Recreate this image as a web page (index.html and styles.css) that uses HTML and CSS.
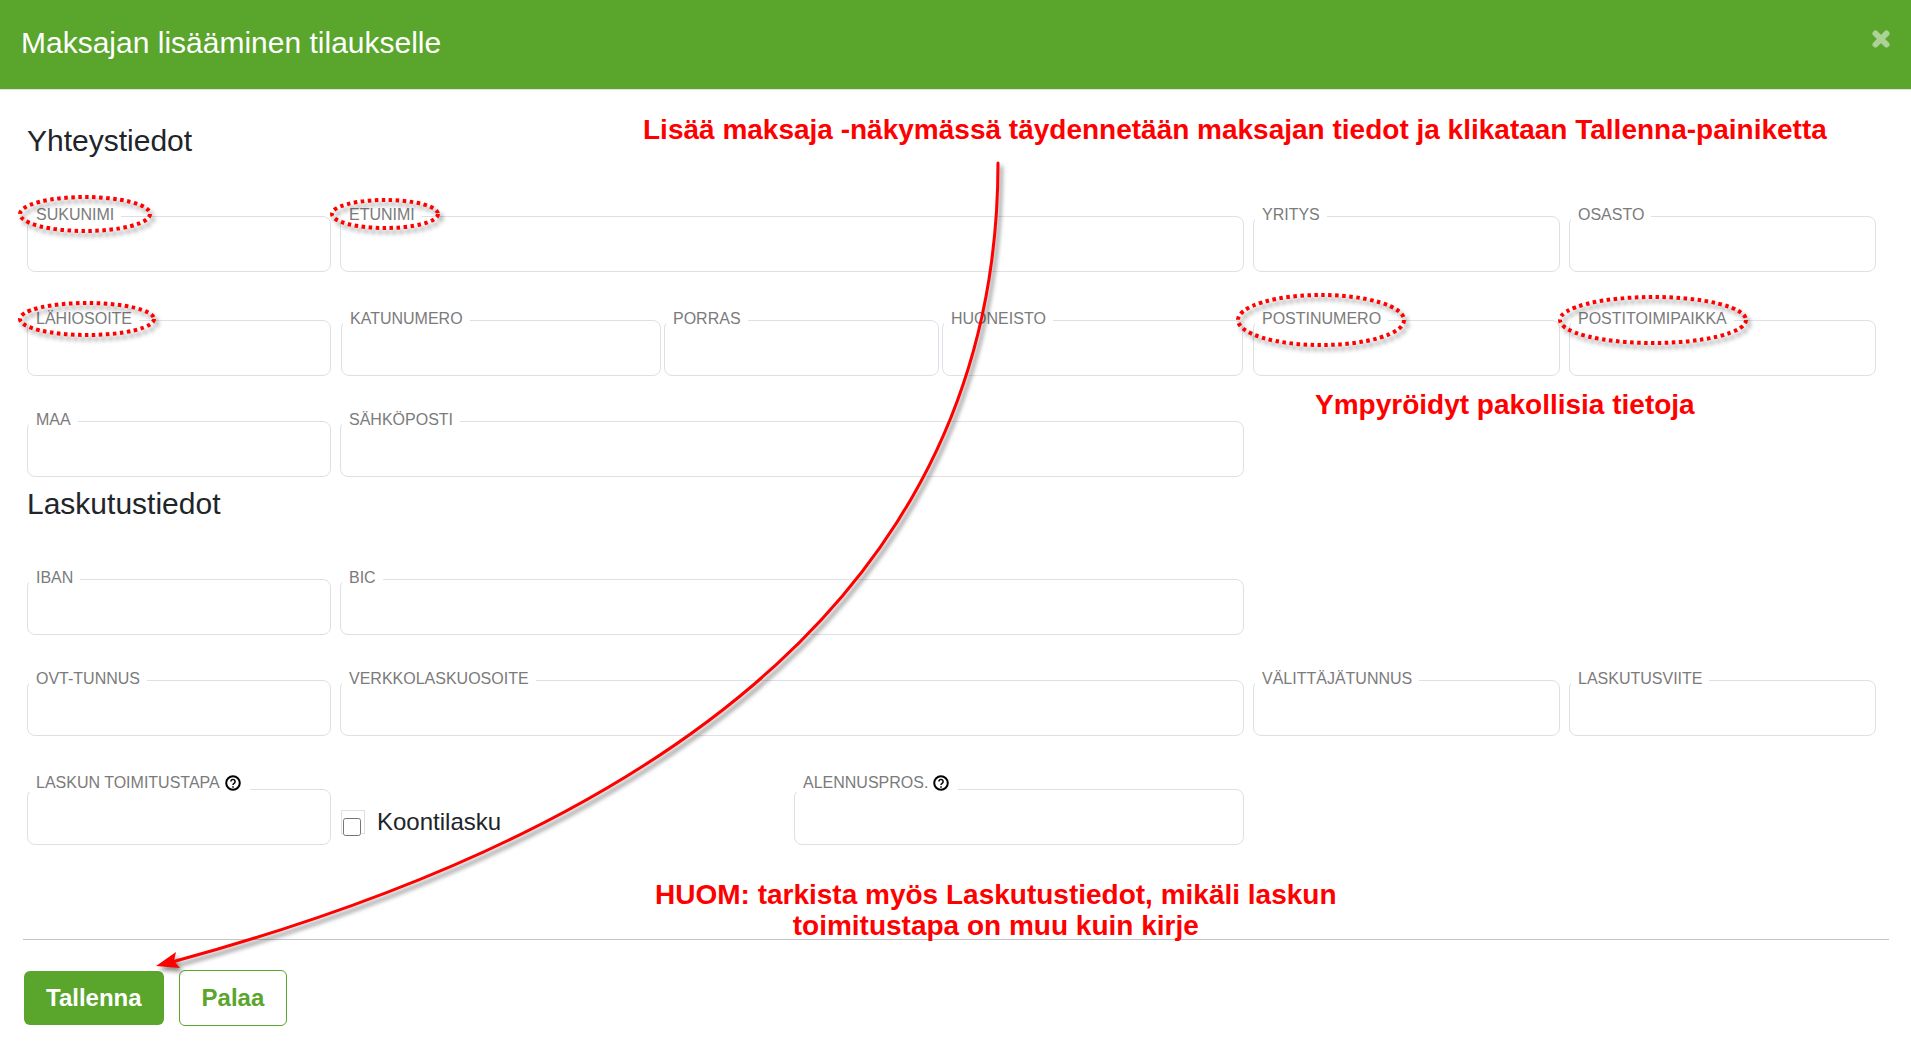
FILE: index.html
```html
<!DOCTYPE html>
<html lang="fi">
<head>
<meta charset="utf-8">
<meta name="viewport" content="width=device-width, initial-scale=1">
<title>Maksajan lisääminen tilaukselle</title>
<link rel="stylesheet" href="styles.css">
</head>
<body>
<header class="topbar">
  <h1 class="topbar-title">Maksajan lisääminen tilaukselle</h1>
  <button class="close" type="button" aria-label="Sulje">
    <svg width="20" height="20" viewBox="0 0 20 20" aria-hidden="true"><path d="M4.5 4.5 15.5 15.5M15.5 4.5 4.5 15.5" stroke="currentColor" stroke-width="6" stroke-linecap="round" fill="none"/></svg>
  </button>
</header>

<main class="page">
  <form>
    <section class="section">
      <h2 class="section-title">Yhteystiedot</h2>
      <div class="row row-spaced">
        <div class="field"><label for="sukunimi">SUKUNIMI</label><input id="sukunimi" type="text" required></div>
        <div class="field"><label for="etunimi">ETUNIMI</label><input id="etunimi" type="text" required></div>
        <div class="field"><label for="yritys">YRITYS</label><input id="yritys" type="text"></div>
        <div class="field"><label for="osasto">OSASTO</label><input id="osasto" type="text"></div>
      </div>
      <div class="row">
        <div class="field"><label for="lahiosoite">LÄHIOSOITE</label><input id="lahiosoite" type="text" required></div>
        <div class="address">
          <div class="field"><label for="katunumero">KATUNUMERO</label><input id="katunumero" type="text"></div>
          <div class="field"><label for="porras">PORRAS</label><input id="porras" type="text"></div>
          <div class="field"><label for="huoneisto">HUONEISTO</label><input id="huoneisto" type="text"></div>
        </div>
        <div class="field"><label for="postinumero">POSTINUMERO</label><input id="postinumero" type="text" required></div>
        <div class="field"><label for="postitoimipaikka">POSTITOIMIPAIKKA</label><input id="postitoimipaikka" type="text" required></div>
      </div>
      <div class="row">
        <div class="field"><label for="maa">MAA</label><input id="maa" type="text"></div>
        <div class="field"><label for="sahkoposti">SÄHKÖPOSTI</label><input id="sahkoposti" type="email"></div>
      </div>
    </section>

    <section class="section">
      <h2 class="section-title">Laskutustiedot</h2>
      <div class="row">
        <div class="field"><label for="iban">IBAN</label><input id="iban" type="text"></div>
        <div class="field"><label for="bic">BIC</label><input id="bic" type="text"></div>
      </div>
      <div class="row row-spaced">
        <div class="field"><label for="ovt">OVT-TUNNUS</label><input id="ovt" type="text"></div>
        <div class="field"><label for="verkkolasku">VERKKOLASKUOSOITE</label><input id="verkkolasku" type="text"></div>
        <div class="field"><label for="valittaja">VÄLITTÄJÄTUNNUS</label><input id="valittaja" type="text"></div>
        <div class="field"><label for="viite">LASKUTUSVIITE</label><input id="viite" type="text"></div>
      </div>
      <div class="row">
        <div class="field field-help">
          <label for="toimitustapa">LASKUN TOIMITUSTAPA
            <svg class="help" viewBox="0 0 16 16" aria-hidden="true"><circle cx="8" cy="8" r="6.8"/><path d="M5.9 6.5a2.1 2.1 0 1 1 3.2 1.8C8.3 8.8 8 9.1 8 9.9M8 11.2v1.5"/></svg>
          </label>
          <input id="toimitustapa" type="text">
        </div>
        <div class="halves">
          <label class="check"><span class="check-frame"><input type="checkbox" name="koontilasku"></span>Koontilasku</label>
          <div class="field field-help">
            <label for="alennus">ALENNUSPROS.
              <svg class="help" viewBox="0 0 16 16" aria-hidden="true"><circle cx="8" cy="8" r="6.8"/><path d="M5.9 6.5a2.1 2.1 0 1 1 3.2 1.8C8.3 8.8 8 9.1 8 9.9M8 11.2v1.5"/></svg>
            </label>
            <input id="alennus" type="text">
          </div>
        </div>
      </div>
    </section>

    <footer class="actions">
      <button class="btn btn-primary" type="submit">Tallenna</button>
      <button class="btn btn-outline" type="button">Palaa</button>
    </footer>
  </form>
</main>

<svg class="marks" aria-hidden="true">
  <g class="rings">
    <ellipse cx="85" cy="214" rx="65" ry="17"/>
    <ellipse cx="385" cy="214" rx="53" ry="14"/>
    <ellipse cx="87" cy="319" rx="67" ry="16"/>
    <ellipse cx="1321" cy="320" rx="83" ry="25"/>
    <ellipse cx="1653" cy="320" rx="93" ry="23"/>
  </g>
  <g class="arrow">
    <path class="arrow-line" d="M998 163Q998 738 172 962"/>
    <path class="arrow-head" d="M156 966 176 952 174 961 180 968Z"/>
  </g>
</svg>
<p class="note note-top">Lisää maksaja -näkymässä täydennetään maksajan tiedot ja klikataan Tallenna-painiketta</p>
<p class="note note-required">Ympyröidyt pakollisia tietoja</p>
<p class="note note-billing">HUOM: tarkista myös Laskutustiedot, mikäli laskun<br>toimitustapa on muu kuin kirje</p>
</body>
</html>
```
FILE: styles.css
```css
* {
  box-sizing: border-box;
}

body {
  position: relative;
  margin: 0;
  background: #fff;
  color: #212529;
  font-family: "Liberation Sans", Arial, sans-serif;
  font-size: 16px;
}

.topbar {
  display: flex;
  justify-content: space-between;
  align-items: flex-start;
  height: 90px;
  padding: 25px 20px 0 21px;
  background: #5aa52c;
  border-bottom: 1px solid #dee2e6;
}

.topbar-title {
  margin: 0;
  color: #fff;
  font-size: 30px;
  font-weight: 400;
  line-height: 36px;
}

.close {
  display: flex;
  margin-top: 4px;
  padding: 0;
  border: 0;
  background: none;
  color: #acd296;
}

.page {
  padding: 33px 22px 24px 23px;
}

.section {
  padding: 0 13px 0 4px;
}

.section + .section {
  margin-top: 9px;
}

.section-title {
  margin: 0 0 47px;
  font-size: 30px;
  font-weight: 400;
  line-height: 36px;
}

.row {
  display: grid;
  grid-template-columns: 304fr 904fr 307fr 307fr;
  gap: 9px;
}

.row + .row {
  margin-top: 35px;
}

.row-spaced + .row {
  margin-top: 38px;
}

.address {
  display: grid;
  grid-template-columns: 320fr 275fr 301fr;
  gap: 3px;
  padding: 0 1px;
}

.halves {
  display: grid;
  grid-template-columns: 1fr 1fr;
  gap: 4px;
}

.field {
  display: flex;
  flex-direction: column;
  align-items: flex-start;
  min-width: 0;
}

.field label {
  display: flex;
  align-items: center;
  gap: 5px;
  z-index: 1;
  margin: 0 0 -8px 2px;
  padding: 0 7px;
  background: #fff;
  color: #7b7b7b;
  line-height: 18px;
}

.field input {
  width: 100%;
  height: 56px;
  padding: 0 12px;
  border: 1px solid #dee0e6;
  border-radius: 8px;
  background: #fff;
  font: inherit;
}

.field-help label {
  margin-bottom: -3px;
  padding-right: 9px;
}

.help {
  width: 16px;
  height: 16px;
  fill: none;
  stroke: #000;
  stroke-width: 2;
}

.help path {
  stroke-width: 1.5;
}

.check {
  display: flex;
  align-items: center;
  align-self: end;
  gap: 12px;
  height: 28px;
  margin: 0 0 9px 1px;
  font-size: 24px;
}

.check-frame {
  width: 24px;
  height: 24px;
  padding: 7px 0 0 1px;
  border: 1px solid #dee0e6;
}

.check input {
  display: block;
  width: 18px;
  height: 18px;
  margin: 0;
}

.actions {
  display: flex;
  align-items: center;
  gap: 15px;
  margin-top: 94px;
  padding: 30px 1px 0;
  border-top: 1px solid #c4c4c4;
}

.btn {
  height: 54px;
  padding: 0 22px;
  border: 0;
  border-radius: 6px;
  font: bold 24px "Liberation Sans", Arial, sans-serif;
}

.btn-primary {
  background: #5aa52c;
  color: #fff;
}

.btn-outline {
  height: 56px;
  border: 1px solid #5aa52c;
  background: #fff;
  color: #5aa52c;
}

/* Instruction marks drawn over the form */
.marks {
  position: absolute;
  top: 0;
  left: 0;
  z-index: 2;
  width: 100%;
  height: 100%;
  pointer-events: none;
}

.rings,
.arrow {
  filter: drop-shadow(3px 4px 2px rgba(0, 0, 0, 0.45));
}

.rings {
  fill: none;
  stroke: #f00;
  stroke-width: 4;
  stroke-dasharray: 3.5 3.5;
}

.arrow-line {
  fill: none;
  stroke: #f00;
  stroke-width: 3;
  stroke-linecap: round;
}

.arrow-head {
  fill: #f00;
}

.note {
  position: absolute;
  z-index: 3;
  margin: 0;
  color: #f00;
  font-size: 28px;
  font-weight: 700;
  line-height: 31px;
  text-align: center;
  white-space: nowrap;
}

.note-top {
  top: 114px;
  left: 643px;
}

.note-required {
  top: 389px;
  left: 1315px;
}

.note-billing {
  top: 879px;
  left: 655px;
}
```
